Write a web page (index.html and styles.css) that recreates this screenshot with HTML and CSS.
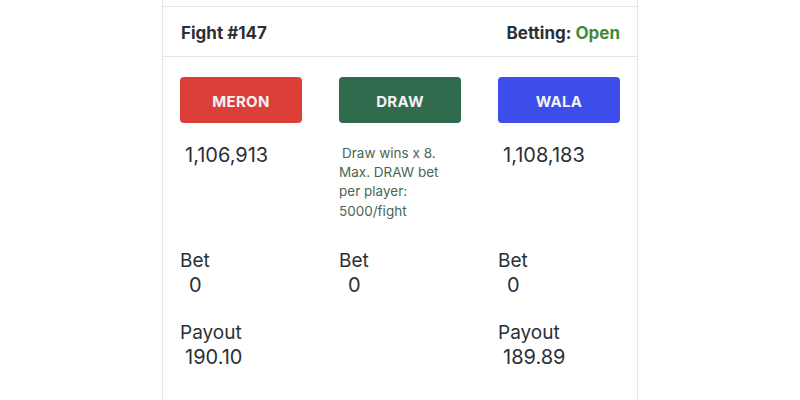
FILE: index.html
```
<!DOCTYPE html>
<html lang="en">
<head>
<meta charset="utf-8">
<title>Fight #147</title>
<link rel="stylesheet" href="styles.css">
</head>
<body>
<div class="card">
  <div class="card-top"></div>
  <div class="card-header">
    <span class="fight">Fight #147</span>
    <span class="status">Betting: <span class="open">Open</span></span>
  </div>
  <div class="card-body">
    <button class="side meron">MERON</button>
    <button class="side draw">DRAW</button>
    <button class="side wala">WALA</button>

    <div class="amount">1,106,913</div>
    <div class="note">Draw wins x 8. Max. DRAW bet per player: 5000/fight</div>
    <div class="amount">1,108,183</div>

    <div class="stat"><div class="label">Bet</div><div class="value zero">0</div></div>
    <div class="stat"><div class="label">Bet</div><div class="value zero">0</div></div>
    <div class="stat"><div class="label">Bet</div><div class="value zero">0</div></div>

    <div class="stat payout"><div class="label">Payout</div><div class="value">190.10</div></div>
    <div class="stat payout"></div>
    <div class="stat payout"><div class="label">Payout</div><div class="value">189.89</div></div>
  </div>
</div>
</body>
</html>
```
FILE: styles.css
```
* { box-sizing: border-box; }
html, body { margin: 0; padding: 0; background: #ffffff; }
body {
  font-family: Inter, "Noto Sans", "Liberation Sans", sans-serif;
  color: #2b2f36;
  height: 400px;
  overflow: hidden;
}
.card {
  width: 476px;
  margin: 0 auto;
  border-left: 1px solid #e4e4e6;
  border-right: 1px solid #e4e4e6;
  min-height: 400px;
}
.card-top {
  height: 7px;
  border-bottom: 1px solid #e4e4e6;
}
.card-header {
  height: 50px;
  display: flex;
  align-items: center;
  justify-content: space-between;
  padding: 3px 17px 0 18px;
  border-bottom: 1px solid #e4e4e6;
  font-size: 17px;
  font-weight: 700;
  color: #2b2f36;
}
.card-header .open { color: #3f8a37; }
.card-body {
  display: grid;
  grid-template-columns: 122px 122px 122px;
  column-gap: 37px;
  padding: 20px 17px 0 17px;
}
.side {
  height: 46px;
  border: none;
  border-radius: 4px;
  color: #f3f3f6;
  font-family: inherit;
  font-size: 15px;
  font-weight: 700;
  letter-spacing: 0.3px;
  padding: 3px 0 0 0;
}
.meron { background: #dc3f38; }
.draw { background: #2f6b4c; }
.wala { background: #3d4de9; }
.amount {
  margin-top: 21px;
  padding-left: 5px;
  font-size: 20px;
  line-height: 23px;
}
.note {
  margin-top: 21px;
  font-size: 13.5px;
  line-height: 19.2px;
  color: #4a6656;
  text-indent: 3px;
}
.stat {
  margin-top: 27px;
  font-size: 19px;
  line-height: 25px;
}
.stat.payout { margin-top: 22px; }
.value { padding-left: 5px; font-size: 20px; }
.value.zero { padding-left: 9px; }
```
